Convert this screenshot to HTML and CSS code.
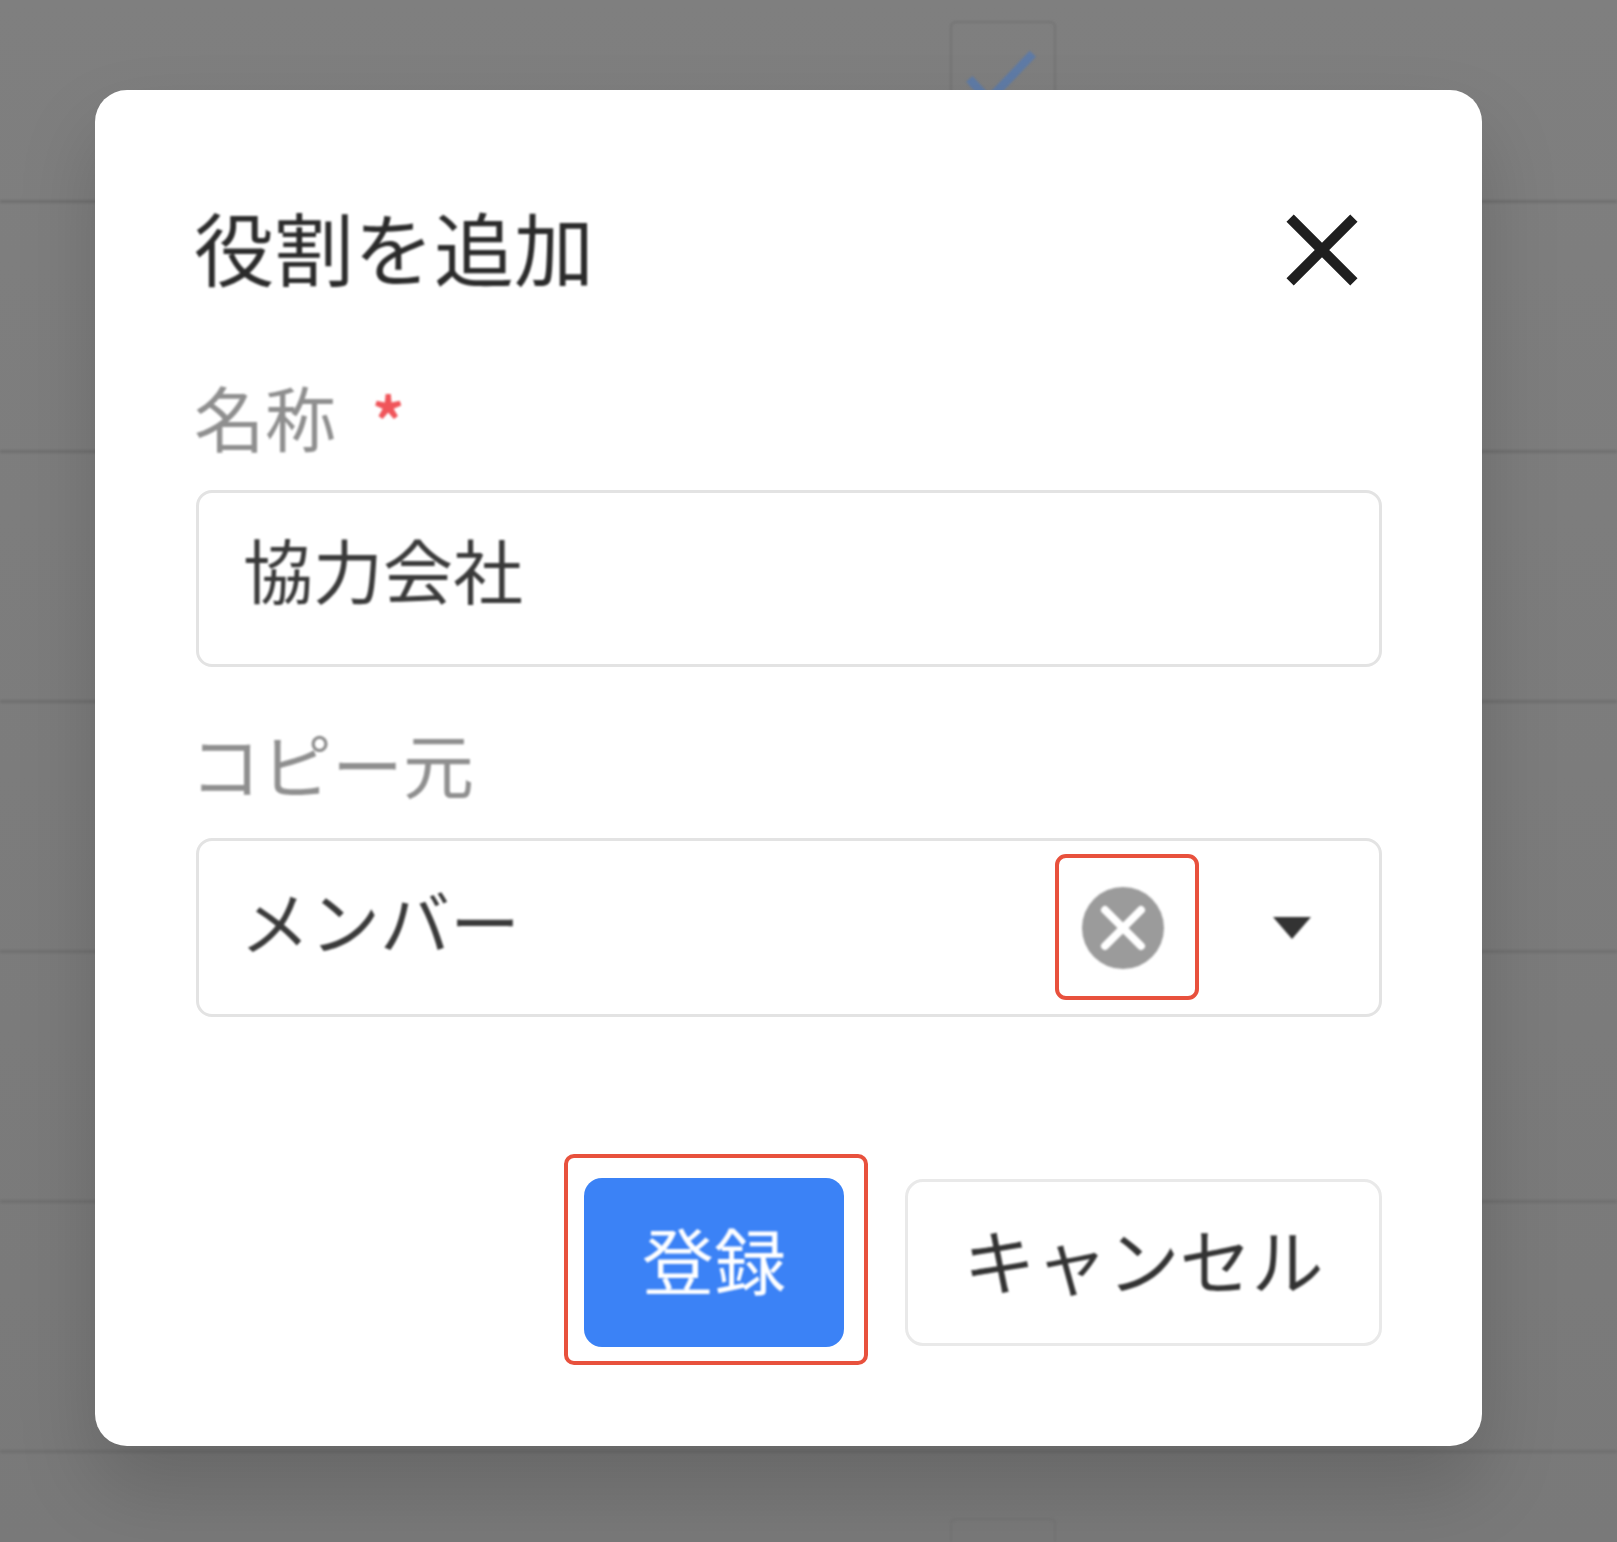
FILE: index.html
```html
<!DOCTYPE html>
<html lang="ja">
<head>
<meta charset="utf-8">
<title>役割を追加</title>
<link rel="stylesheet" href="styles.css">
</head>
<body>
<div class="table">
  <div class="row row-first">
    <span class="check-box">
      <svg class="check-icon" viewBox="0 0 106 106"><path d="M18 58 L38 80 L84 32"/></svg>
    </span>
  </div>
  <div class="row"></div>
  <div class="row"></div>
  <div class="row"></div>
  <div class="row"></div>
  <div class="row"></div>
  <div class="row row-last"><span class="check-box"></span></div>
</div>

<section class="modal">
  <header class="modal-head">
    <h1 class="modal-title">役割を追加</h1>
    <svg class="close-icon" viewBox="0 0 70 70"><path d="M4 4 L66 66 M66 4 L4 66"/></svg>
  </header>

  <div class="field-label">名称<span class="req">*</span></div>
  <div class="control"><span class="control-text">協力会社</span></div>

  <div class="field-label field-label-second">コピー元</div>
  <div class="control control-select">
    <span class="control-text control-text-select">メンバー</span>
    <span class="clear-wrap">
      <svg class="clear-icon" viewBox="0 0 82 82">
        <circle cx="41" cy="41" r="41"/>
        <path d="M23 23 L59 59 M59 23 L23 59"/>
      </svg>
    </span>
    <svg class="caret-icon" viewBox="0 0 40 24"><path d="M1 1 H39 L20 23 Z"/></svg>
  </div>

  <footer class="modal-foot">
    <button class="btn btn-primary" type="button"><span class="btn-text">登録</span></button>
    <button class="btn btn-plain" type="button"><span class="btn-text">キャンセル</span></button>
  </footer>
</section>
</body>
</html>
```

FILE: styles.css
```css
*, *::after { box-sizing: border-box; }

html, body {
  margin: 0;
  height: 1542px;
  overflow: hidden;
}

body {
  position: relative;
  background: linear-gradient(#7f7f7f, #797979);
  font-family: "Noto Sans CJK JP", "Noto Sans", sans-serif;
}

.table {
  display: flex;
  flex-direction: column;
  height: 1542px;
  overflow: hidden;
  filter: blur(1px);
}

.row {
  flex: none;
  height: 250px;
  border-bottom: 3px solid #707070;
  display: flex;
  justify-content: center;
}

.row-first {
  height: 203px;
  padding-top: 21px;
  padding-left: 388px;
}

.row-last {
  border-bottom: 0;
  height: 89px;
  overflow: hidden;
  padding-top: 65px;
  padding-left: 388px;
}

.check-box {
  width: 106px;
  height: 106px;
  flex: none;
  border: 2px solid #747474;
  border-radius: 6px;
  display: block;
}

.check-icon {
  display: block;
  width: 102px;
  height: 102px;
  fill: none;
  stroke: #5f7ba6;
  stroke-width: 9;
}

.modal {
  position: absolute;
  left: 95px;
  top: 90px;
  width: 1387px;
  height: 1356px;
  padding: 100px 100px 99px 101px;
  background: #fff;
  border-radius: 32px;
  box-shadow: 0 40px 80px rgba(0, 0, 0, 0.16);
}

.modal-head {
  height: 120px;
  margin-bottom: 60px;
  display: flex;
  align-items: center;
  justify-content: space-between;
  padding-right: 24px;
}

.modal-title {
  margin: 0 0 0 -2px;
  padding-bottom: 11px;
  font-size: 80px;
  font-weight: 400;
  line-height: 110px;
  color: #2b2b2b;
  filter: blur(0.9px);
}

.close-icon {
  width: 72px;
  height: 72px;
  fill: none;
  stroke: #1f1f1f;
  stroke-width: 10;
  filter: blur(0.6px);
}

.field-label {
  height: 100px;
  margin: 0 0 20px -2px;
  font-size: 71px;
  line-height: 90px;
  color: #8f8f8f;
  display: flex;
  filter: blur(0.9px);
}

.field-label-second {
  margin: 53px 0 18px -6px;
  line-height: 84px;
}

.req {
  margin-left: 36px;
  font-size: 64px;
  font-weight: 700;
  line-height: 96px;
  color: #f0555a;
}

.control {
  height: 177px;
  display: flex;
  align-items: center;
  padding-left: 44px;
  border: 3px solid #e3e3e3;
  border-radius: 16px;
}

.control-select {
  height: 179px;
  position: relative;
}

.control-text {
  flex: 1;
  padding-bottom: 20px;
  font-size: 70px;
  line-height: 100px;
  color: #3a3a3a;
  filter: blur(0.9px);
}

.control-text-select {
  margin-left: -3px;
  padding-bottom: 16px;
}

.clear-wrap {
  position: relative;
  width: 82px;
  height: 82px;
  display: block;
  margin-right: 215px;
}

.clear-wrap::after {
  content: "";
  position: absolute;
  left: -27px;
  top: -33px;
  width: 144px;
  height: 146px;
  border: 4px solid #e8513d;
  border-radius: 11px;
}

.clear-icon {
  display: block;
  width: 82px;
  height: 82px;
  filter: blur(0.8px);
}

.clear-icon circle { fill: #9b9b9b; }

.clear-icon path {
  fill: none;
  stroke: #fff;
  stroke-width: 8;
  stroke-linecap: round;
}

.caret-icon {
  position: absolute;
  right: 67px;
  top: 75px;
  width: 40px;
  height: 24px;
  fill: #333;
  filter: blur(1px);
}

.modal-foot {
  margin-top: 161px;
  display: flex;
  justify-content: flex-end;
  align-items: center;
  gap: 61px;
}

.btn {
  font: inherit;
  font-size: 72px;
  line-height: 100px;
  padding: 0 0 10px;
  border-radius: 18px;
  display: flex;
  align-items: center;
  justify-content: center;
}

.btn-text { filter: blur(0.9px); }

.btn-primary {
  position: relative;
  width: 260px;
  height: 169px;
  background: #3b82f6;
  color: #fff;
  border: 0;
}

.btn-primary::after {
  content: "";
  position: absolute;
  left: -20px;
  top: -24px;
  width: 304px;
  height: 211px;
  border: 4px solid #e8513d;
  border-radius: 10px;
}

.btn-plain {
  width: 477px;
  height: 167px;
  background: #fff;
  color: #333;
  border: 3px solid #e9e9e9;
}
```
